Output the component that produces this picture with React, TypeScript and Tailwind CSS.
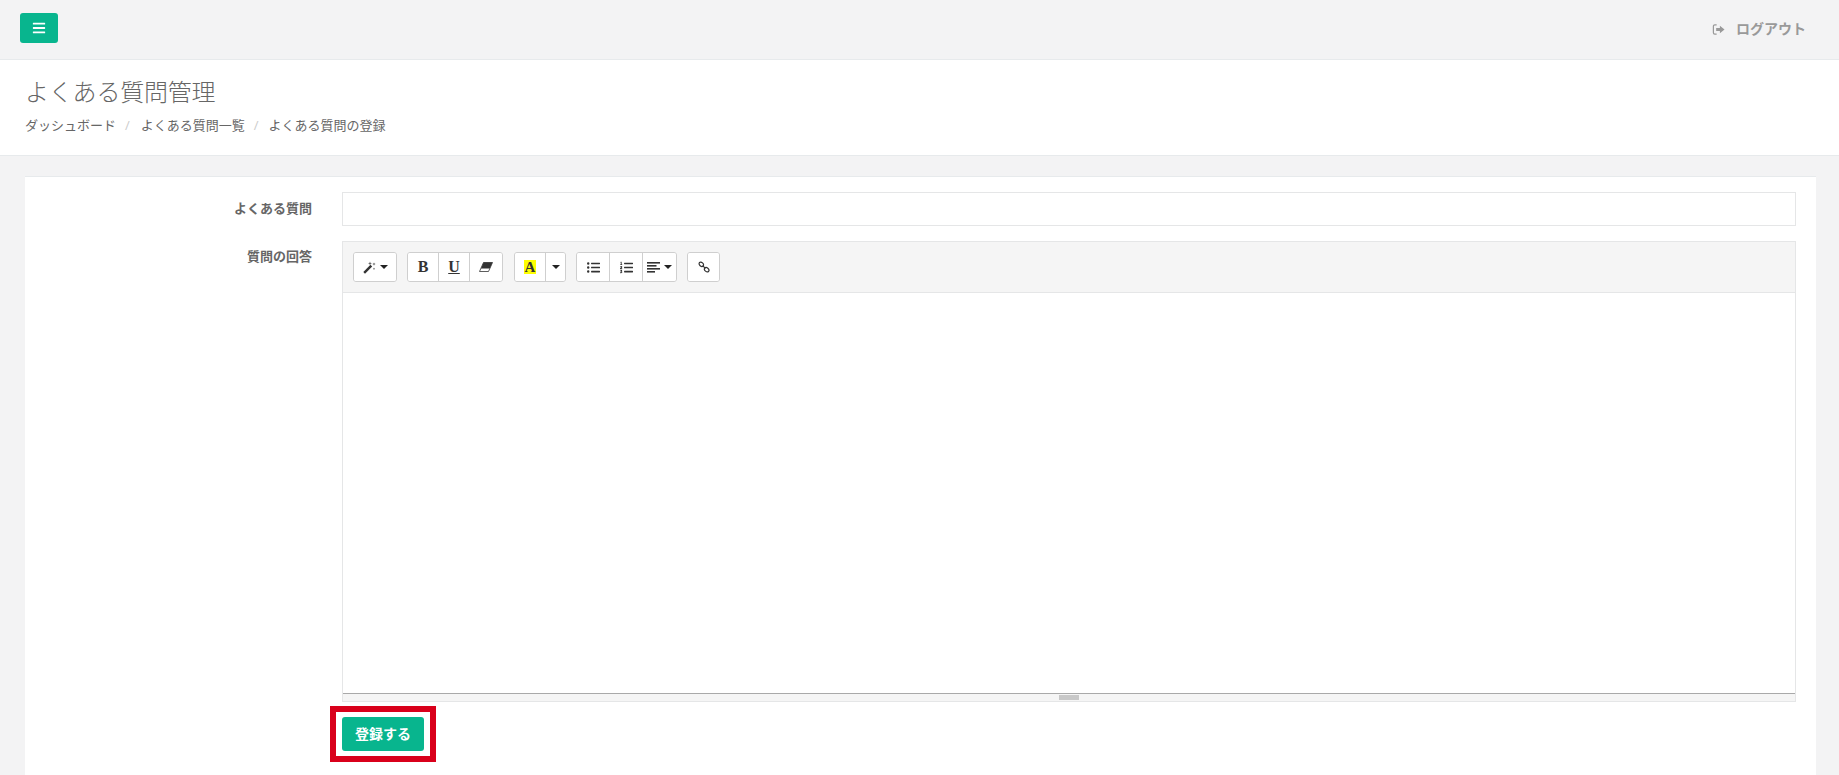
import React from 'react';
import { FaBars, FaListUl, FaListOl } from 'react-icons/fa';

const Caret = () => (
  <span className="inline-block w-0 h-0 border-x-[4px] border-x-transparent border-t-[4px] border-t-[#222]" />
);

const ToolButton: React.FC<{ className: string; children: React.ReactNode }> = ({ className, children }) => (
  <div className={`h-[28px] bg-white flex items-center justify-center gap-[4px] text-[#333] ${className}`}>
    {children}
  </div>
);

const Group: React.FC<{ className?: string; children: React.ReactNode }> = ({ className = '', children }) => (
  <div className={`flex border border-[#cfcfcf] rounded-[3px] divide-x divide-[#cfcfcf] overflow-hidden ${className}`}>{children}</div>
);

const App: React.FC = () => {
  return (
    <div
      className="h-[775px] overflow-hidden bg-[#f3f3f4] text-[#666666] text-[13px]"
      style={{ fontFamily: '"Open Sans", "Noto Sans CJK JP", sans-serif' }}
    >
      {/* Top bar */}
      <div className="h-[60px] border-b border-[#e7eaec] flex items-start justify-between pl-[20px] pr-[33px]">
        <button className="mt-[13px] w-[38px] h-[30px] rounded-[3px] bg-[#08b58e] flex items-center justify-center text-white">
          <FaBars size={14} />
        </button>
        <div className="mt-[19px] flex items-center text-[#999999] font-bold text-[14px] leading-[20px]">
          <svg width="13" height="13" viewBox="0 0 14 14" className="mr-[11px]">
            <path d="M5 2H3a1.500 1.500 0 0 0-1.500 1.500v7A1.500 1.500 0 0 0 3 12h2" fill="none" stroke="#999" strokeWidth="1.300" />
            <path d="M4.500 5.500h4V3l5 4-5 4V8.500h-4z" fill="#999" />
          </svg>
          ログアウト
        </div>
      </div>

      {/* Page heading */}
      <div className="h-[96px] bg-white border-b border-[#e7eaec] pl-[25px] pt-[16px]">
        <h2 className="text-[24px] leading-[32px] font-light tracking-[-0.2px]">よくある質問管理</h2>
        <div className="mt-[7px] flex items-center text-[13px] leading-[20px]">
          <span>ダッシュボード</span>
          <span className="text-[#ccc] mx-[9px]">/</span>
          <span className="ml-[2px]">よくある質問一覧</span>
          <span className="text-[#ccc] mx-[9px]">/</span>
          <span className="ml-[1px]">よくある質問の登録</span>
        </div>
      </div>

      {/* Form panel */}
      <div className="mt-[20px] ml-[25px] mr-[23px] bg-white border-t border-[#e7eaec] pt-[15px] pr-[20px] h-[640px]">
        <div className="flex">
          <label className="w-[287px] shrink-0 text-right font-bold text-[13px] leading-[20px] pt-[6px]">よくある質問</label>
          <div className="ml-[30px] flex-1 h-[34px] border border-[#e5e6e7] bg-white" />
        </div>

        <div className="flex mt-[15px]">
          <label className="w-[287px] shrink-0 text-right font-bold text-[13px] leading-[20px] pt-[5px]">質問の回答</label>
          <div className="ml-[30px] flex-1">
            <div className="border border-[#e5e6e7]">
              <div className="h-[51px] bg-[#f5f5f5] border-b border-[#e5e6e7] pl-[10px] pt-[10px] flex items-start gap-[10px]">
                <Group>
                  <ToolButton className="w-[42px]">
                    <svg width="13" height="13" viewBox="0 0 13 13">
                      <path d="M0.300 11l7.200-7.200 1.700 1.700-7.200 7.200z" fill="#333" />
                      <path d="M7 0.500l.6 1.400 1.400.6-1.400.6L7 4.500l-.6-1.400L5 2.500l1.400-.6zM11 1.500l.5 1.100 1.100.5-1.100.5-.5 1.100-.5-1.100-1.100-.5 1.100-.5zM11 6.500l.4.9.9.4-.9.4-.4.9-.4-.9-.9-.4.9-.4z" fill="#666" />
                    </svg>
                    <Caret />
                  </ToolButton>
                </Group>
                <Group>
                  <ToolButton className="w-[31px] font-bold text-[16px]"><span style={{ fontFamily: '"Liberation Serif", serif' }}>B</span></ToolButton>
                  <ToolButton className="w-[31px] font-bold text-[16px]"><span className="underline" style={{ fontFamily: '"Liberation Serif", serif' }}>U</span></ToolButton>
                  <ToolButton className="w-[32px]">
                    <svg width="14" height="10" viewBox="0 0 14 10">
                      <path d="M4.500 0.500H13.500L9.500 9.500H0.500z" fill="#fff" stroke="#333" strokeWidth="0.800" />
                      <path d="M4.500 0.500H13.500L10.800 6.500H2z" fill="#333" />
                    </svg>
                  </ToolButton>
                </Group>
                <Group className="ml-px">
                  <ToolButton className="w-[31px]">
                    <span className="bg-[#ffff00] w-[12px] h-[14px] flex items-center justify-center font-bold text-[15px] leading-none" style={{ fontFamily: '"Liberation Serif", serif' }}>A</span>
                  </ToolButton>
                  <ToolButton className="w-[19px]"><Caret /></ToolButton>
                </Group>
                <Group>
                  <ToolButton className="w-[33px]"><FaListUl size={13} /></ToolButton>
                  <ToolButton className="w-[33px]"><FaListOl size={13} /></ToolButton>
                  <ToolButton className="w-[33px]">
                    <svg width="13" height="11" viewBox="0 0 13 11" fill="#333">
                      <rect x="0" y="0" width="13" height="1.600" />
                      <rect x="0" y="3" width="9.500" height="1.600" />
                      <rect x="0" y="6" width="13" height="1.600" />
                      <rect x="0" y="9" width="8" height="1.600" />
                    </svg>
                    <Caret />
                  </ToolButton>
                </Group>
                <Group>
                  <ToolButton className="w-[31px]">
                    <svg width="12" height="12" viewBox="0 0 13 13" fill="none" stroke="#333" strokeWidth="1.300">
                      <ellipse cx="3.600" cy="3.600" rx="2.700" ry="2" transform="rotate(40 3.600 3.600)" />
                      <ellipse cx="9.400" cy="9.400" rx="2.700" ry="2" transform="rotate(40 9.400 9.400)" />
                      <path d="M5 5l3 3" />
                    </svg>
                  </ToolButton>
                </Group>
              </div>
              <div className="h-[400px] bg-white" />
              <div className="h-[8px] bg-[#f5f5f5] border-t border-[#a9a9a9] flex justify-center items-center">
                <div className="w-[20px] h-[5px] bg-[#c8c8c8]" />
              </div>
            </div>
            <div className="mt-[4px] -ml-[12px] w-[106px] h-[56px] border-[6px] border-[#d9001b] flex items-center justify-center">
              <button className="w-[82px] h-[34px] pb-[2px] rounded-[3px] bg-[#08b58e] text-white font-bold text-[14px]">登録する</button>
            </div>
          </div>
        </div>
      </div>
    </div>
  );
};

export default App;
